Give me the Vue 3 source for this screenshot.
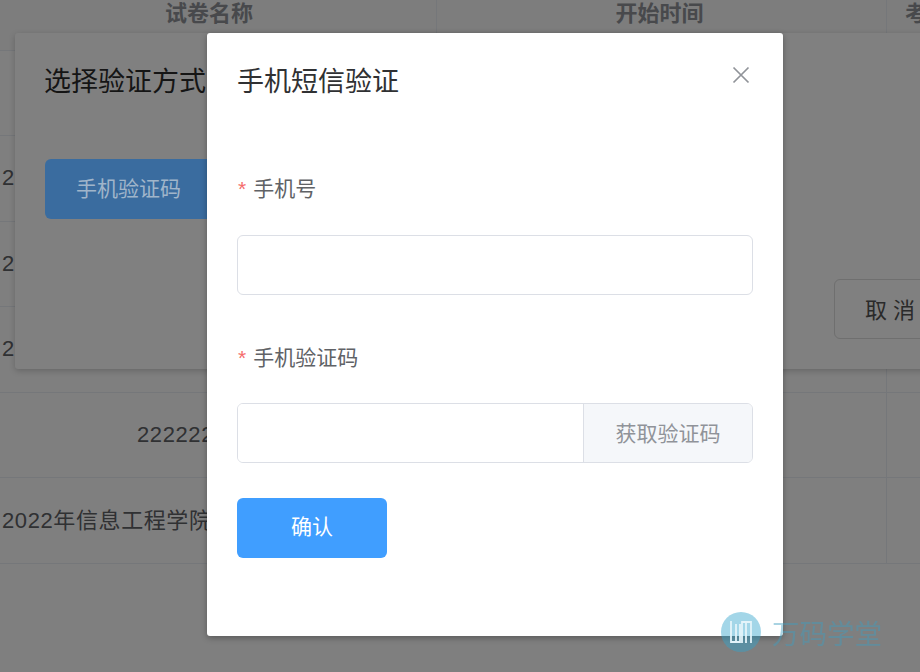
<script setup>
const rows = [
  { name: "" },
  { name: "2", cls: "left" },
  { name: "2", cls: "left" },
  { name: "2", cls: "left" },
  { name: "2222222", cls: "mid" },
  { name: "2022年信息工程学院", cls: "left up" }
]
</script>

<template>
  <div class="page">
    <!-- table behind everything -->
    <div class="table">
      <div class="head">
        <div class="cell name">试卷名称</div>
        <div class="cell time">开始时间</div>
        <div class="cell last">考</div>
      </div>
      <div v-for="(r, i) in rows" :key="i" class="row">
        <div class="cell name" :class="r.cls">{{ r.name }}</div>
        <div class="cell time"></div>
        <div class="cell last"></div>
      </div>
    </div>

    <div class="mask"></div>

    <!-- first dialog -->
    <div class="dialog-back">
      <h2 class="back-title">选择验证方式</h2>
      <div class="back-btns">
        <button class="btn-phone">手机验证码</button>
        <button class="btn-cancel">取 消</button>
      </div>
    </div>

    <!-- sms dialog -->
    <div class="modal">
      <div class="modal-header">
        <h2>手机短信验证</h2>
        <svg class="close" width="18" height="18" viewBox="0 0 18 18">
          <path d="M1.5 1.5 L16.5 16.5 M16.5 1.5 L1.5 16.5" stroke="#909399" stroke-width="1.7" fill="none" />
        </svg>
      </div>

      <label class="label"><span class="star">*</span>手机号</label>
      <input class="input" type="text" />

      <label class="label second"><span class="star">*</span>手机验证码</label>
      <div class="input-group">
        <input type="text" />
        <div class="append">获取验证码</div>
      </div>

      <button class="confirm">确认</button>
    </div>

    <!-- watermark -->
    <div class="mark">
      <div class="mark-logo">
        <svg width="24" height="26" viewBox="0 0 24 26">
          <path d="M2 2 V23 H7 V5 M7 23 H11 V5 M13 24 V3 H17 V24 M17 3 H22 V24" stroke="#e4f4fa" stroke-width="1.8" fill="none" />
        </svg>
      </div>
      <span class="mark-text">万码学堂</span>
    </div>
  </div>
</template>

<style>
html, body {
  margin: 0;
  overflow: hidden;
}
</style>

<style scoped>
.page {
  position: relative;
  width: 920px;
  height: 672px;
  overflow: hidden;
  background: #fff;
  font-family: "Liberation Sans", "Noto Sans CJK SC", sans-serif;
}

.table {
  color: #606266;
}
.head {
  display: flex;
  height: 50.5px;
  background: #fafafa;
  border-bottom: 1px solid #ebeef5;
  box-sizing: border-box;
  font-size: 22px;
  font-weight: 700;
  color: #909399;
}
.head .cell {
  align-items: flex-start;
  line-height: 27px;
}
.head .name {
  padding-right: 18px;
}
.head .time {
  padding-right: 4px;
}
.row {
  display: flex;
  height: 85.5px;
  box-sizing: border-box;
  border-bottom: 1px solid #ebeef5;
  font-size: 22px;
  letter-spacing: 0.6px;
}
.cell {
  display: flex;
  justify-content: center;
  align-items: center;
  box-sizing: border-box;
  border-right: 1px solid #ebeef5;
  white-space: nowrap;
}
.name {
  width: 437px;
  flex: none;
}
.name.left,
.name.mid {
  justify-content: flex-start;
  padding-left: 2px;
}
.name.mid {
  padding-left: 137px;
}
.name.up {
  padding-bottom: 5px;
}
.time {
  width: 450px;
  flex: none;
}
.last {
  flex: 1;
  border-right: none;
  justify-content: flex-start;
  padding-left: 18px;
}

.mask {
  position: absolute;
  inset: 0;
  background: rgba(0, 0, 0, 0.5);
}

.dialog-back {
  position: absolute;
  left: 15px;
  top: 33px;
  width: 1100px;
  height: 336px;
  padding: 30px 30px 30px 29px;
  box-sizing: border-box;
  background: #808080;
  border-radius: 3px;
  box-shadow: 0 2px 6px rgba(0, 0, 0, 0.2);
}
.back-title {
  margin: 0;
  font-size: 27px;
  font-weight: 400;
  line-height: 38px;
  color: #151515;
}
.back-btns {
  display: flex;
  align-items: flex-start;
  margin: 58px 0 0 1px;
}
.btn-phone {
  width: 200px;
  height: 60px;
  padding: 0 0 4px 31px;
  border: none;
  border-radius: 6px;
  background: #3a6c9f;
  color: #a0b5ca;
  font: inherit;
  font-size: 21px;
  text-align: left;
}
.btn-cancel {
  width: 120px;
  height: 60px;
  margin: 120px 0 0 589px;
  padding: 0 8px 3px 0;
  background: #808080;
  border: 1px solid #6f6f6f;
  border-radius: 6px;
  color: #2a2a2a;
  font: inherit;
  font-size: 22px;
}

.modal {
  position: absolute;
  left: 207px;
  top: 33px;
  width: 576px;
  height: 603px;
  padding: 30px;
  box-sizing: border-box;
  background: #fff;
  border-radius: 3px;
  box-shadow: 0 2px 6px rgba(0, 0, 0, 0.3);
}
.modal-header {
  display: flex;
  justify-content: space-between;
  align-items: flex-start;
}
.modal-header h2 {
  margin: 0;
  font-size: 27px;
  font-weight: 400;
  line-height: 38px;
  color: #303133;
}
.close {
  margin: 3px 3px 0 0;
}
.label {
  display: block;
  margin-top: 73px;
  font-size: 21px;
  line-height: 30px;
  color: #606266;
}
.label.second {
  margin-top: 48px;
}
.star {
  color: #f56c6c;
  margin: 0 7px 0 1px;
}
.input {
  display: block;
  width: 516px;
  height: 60px;
  margin-top: 31px;
  box-sizing: border-box;
  border: 1px solid #dcdfe6;
  border-radius: 6px;
}
.input-group {
  display: flex;
  width: 516px;
  height: 60px;
  margin-top: 30px;
  box-sizing: border-box;
  border: 1px solid #dcdfe6;
  border-radius: 6px;
  overflow: hidden;
}
.input-group input {
  flex: 1;
  min-width: 0;
  border: none;
  outline: none;
}
.append {
  display: flex;
  align-items: center;
  justify-content: center;
  width: 169px;
  flex: none;
  padding-bottom: 3px;
  box-sizing: border-box;
  border-left: 1px solid #dcdfe6;
  background: #f5f7fa;
  color: #909399;
  font-size: 21px;
}
.confirm {
  display: block;
  width: 150px;
  height: 60px;
  margin-top: 35px;
  padding-bottom: 7px;
  border: none;
  border-radius: 6px;
  background: #409eff;
  color: #fff;
  font: inherit;
  font-size: 21px;
}

.mark {
  position: absolute;
  left: 721px;
  top: 612px;
  display: flex;
  align-items: center;
  gap: 11px;
  color: rgba(64, 158, 190, 0.45);
  font-size: 27.5px;
}
.mark-logo {
  display: flex;
  align-items: center;
  justify-content: center;
  width: 40px;
  height: 40px;
  border-radius: 50%;
  background: rgba(52, 165, 205, 0.45);
}
.mark-text {
  filter: blur(0.5px);
}
</style>
